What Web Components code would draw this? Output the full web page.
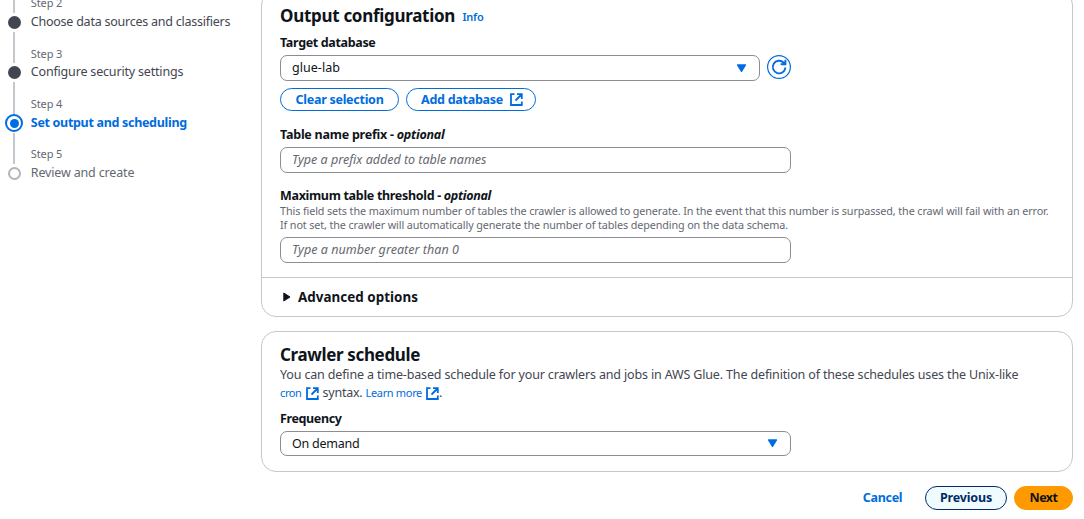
<!DOCTYPE html>
<html lang="en">
<head>
<meta charset="utf-8">
<title>Set output and scheduling</title>
<style>
html,body{margin:0;height:519px;overflow:hidden;background:#fff}
body{font-family:"Noto Sans","Open Sans",sans-serif;font-size:12.5px;color:#0f141a}
</style>
</head>
<body>
<crawler-wizard></crawler-wizard>
<script>
const define=(name,html,setup)=>customElements.define(name,class extends HTMLElement{
  connectedCallback(){
    if(this.shadowRoot)return;
    const root=this.attachShadow({mode:'open'});
    root.innerHTML=html;
    if(setup)setup(this,root);
  }
});

/* Text run tracked to a given advance width (attribute w). */
define('ui-text',`<style>:host{display:inline-block;white-space:nowrap;font-kerning:normal}span{display:inline-block}</style><span><slot></slot></span>`,(el,root)=>{
  const w=+el.getAttribute('w');
  const s=root.querySelector('span');
  const n=el.textContent.length;
  el.style.fontVariantLigatures='none';
  el.style.letterSpacing='0px';
  const nat=s.getBoundingClientRect().width;
  el.style.letterSpacing=((w-nat)/n).toFixed(4)+'px';
  el.style.width=w+'px';
});

define('external-icon',`<style>:host{display:inline-block;width:13px;height:13px}svg{display:block}</style>
<svg width="13" height="13" viewBox="0 0 13 13" fill="none" stroke="currentColor" stroke-width="1.8"><path d="M4.500 1.200H1v10.800h10.800V8.500M7 1.200h4.800V6M11.500 1.500L5.500 7.500"/></svg>`);

define('wizard-step',`<style>
:host{display:grid;grid-template-columns:28px 1fr;column-gap:2.500px;height:50.400px}
.rail{display:flex;flex-direction:column;align-items:center}
.line{width:2px;background:#c6c6cd;height:23.900px}
.after{height:auto;flex:1}
:host([state=todo]) .after{display:none}
.dot{box-sizing:border-box;width:13px;height:13px;border-radius:50%;background:#424650;margin:3px 0;flex:none}
:host([state=active]) .dot{width:18px;height:18px;border:2px solid #006ce0;background:#006ce0;background-clip:content-box;padding:2.500px;margin:.5px 0}
:host([state=todo]) .dot{background:#fff;border:2px solid #b4b4bb}
.text{padding-top:6.200px;color:#424650}
.n{font-size:11px;line-height:16px;height:16px;color:#656871;margin-bottom:1.600px}
.t{line-height:18px;height:18px}
:host([state=active]) .t{color:#006ce0;font-weight:700}
:host([state=todo]) .t{color:#656871}
</style><div class="rail"><div class="line"></div><div class="dot"></div><div class="line after"></div></div>
<div class="text"><div class="n"><slot name="n"></slot></div><div class="t"><slot></slot></div></div>`);

define('step-nav',`<style>:host{display:block;margin-top:-10.900px;padding-left:.3px}</style>
<wizard-step><ui-text slot="n" w="31.500">Step 2</ui-text><ui-text w="199.500">Choose data sources and classifiers</ui-text></wizard-step>
<wizard-step><ui-text slot="n" w="31.500">Step 3</ui-text><ui-text w="152.500">Configure security settings</ui-text></wizard-step>
<wizard-step state="active"><ui-text slot="n" w="31.500">Step 4</ui-text><ui-text w="156">Set output and scheduling</ui-text></wizard-step>
<wizard-step state="todo"><ui-text slot="n" w="31.500">Step 5</ui-text><ui-text w="103.500">Review and create</ui-text></wizard-step>`);

define('ui-card',`<style>:host{display:block;box-sizing:border-box;border:1px solid #c6c6cd;border-radius:15px;background:#fff}.b{padding:0 18px}</style><div class="b"><slot></slot></div><slot name="footer"></slot>`);

define('ui-heading',`<style>:host{display:flex;align-items:baseline;gap:7.500px;height:22px;line-height:22px;font-size:17px;font-weight:700}</style><slot></slot>`);

define('ui-link',`<style>:host{color:#006ce0;font-size:11px;font-weight:var(--w,400)}</style><slot></slot>`);

define('ui-label',`<style>:host{display:block;height:18px;line-height:18px;font-weight:700}</style><slot></slot>`);

define('ui-field',`<style>
:host{display:flex;align-items:center;justify-content:space-between;box-sizing:border-box;width:511px;height:26px;border:1px solid #8c8c94;border-radius:7px;padding:0 12.500px 0 11px;line-height:18px}
:host([placeholder]){color:#656871;font-style:italic}
svg{display:none}:host([select]) svg{display:block}
</style><slot></slot><svg width="11" height="9" viewBox="0 0 11 9"><path d="M1.500 1h8L5.500 7.500z" fill="#006ce0" stroke="#006ce0" stroke-width="1.300" stroke-linejoin="round"/></svg>`);

define('ui-button',`<style>
:host{display:inline-flex;align-items:center;justify-content:center;gap:7px;box-sizing:border-box;height:23px;border:1.500px solid #006ce0;border-radius:13px;color:#006ce0;font-weight:700;line-height:18px;background:#fff}
:host([kind=previous]){height:24px;border-color:#002b66;color:#002b66;background:#f0fbff}
:host([kind=next]){height:24px;border-color:#ff9900;background:#ff9900;color:#0f141a}
:host([kind=text]){height:24px;border-color:transparent}
</style><slot></slot>`);

define('refresh-button',`<style>:host{display:block;width:24px;height:24px}svg{display:block}</style>
<svg width="24" height="24" viewBox="0 0 24 24" fill="none" stroke="#006ce0"><circle cx="12" cy="12" r="11.400" stroke-width="1.200"/><path d="M18.400 12.500a6.300 6.300 0 1 1-1.900-5L18.300 9M18.400 4.700v4.500h-4.700" stroke-width="1.900"/></svg>`);

define('output-card',`<style>
:host{display:block}
ui-card{height:327px;padding-top:14px}
.row{display:flex;gap:7px;align-items:flex-start}
.hint{font-size:10.800px;line-height:14px;color:#656871;display:flex;flex-direction:column;margin-bottom:5px;height:28px}
.adv{display:flex;align-items:center;gap:7.500px;border-top:1px solid #c6c6cd;height:38px;margin-top:14px;padding-left:20.500px;font-size:13.400px;line-height:18px;font-weight:700}
.adv ui-text{margin-bottom:1px}
</style>
<ui-card>
<ui-heading><ui-text w="175">Output configuration</ui-text><ui-link style="--w:600;margin-bottom:1px;position:relative;top:-1px"><ui-text w="21">Info</ui-text></ui-link></ui-heading>
<ui-label style="margin:7px 0 3px"><ui-text w="95.500">Target database</ui-text></ui-label>
<div class="row"><ui-field select style="width:480px"><ui-text w="48">glue-lab</ui-text></ui-field><refresh-button></refresh-button></div>
<div class="row" style="margin:7px 0 15px"><ui-button style="width:119px"><ui-text w="88">Clear selection</ui-text></ui-button><ui-button style="width:130px;padding-left:2px"><ui-text w="82">Add database</ui-text><external-icon></external-icon></ui-button></div>
<ui-label style="margin-bottom:3px"><ui-text w="164.500">Table name prefix - <i>optional</i></ui-text></ui-label>
<ui-field placeholder><ui-text w="194.500">Type a prefix added to table names</ui-text></ui-field>
<ui-label style="margin-top:14px;height:17px"><ui-text w="211">Maximum table threshold - <i>optional</i></ui-text></ui-label>
<div class="hint"><ui-text w="768.500">This field sets the maximum number of tables the crawler is allowed to generate. In the event that this number is surpassed, the crawl will fail with an error.</ui-text><ui-text w="508">If not set, the crawler will automatically generate the number of tables depending on the data schema.</ui-text></div>
<ui-field placeholder><ui-text w="167">Type a number greater than 0</ui-text></ui-field>
<div class="adv" slot="footer"><svg width="8" height="10" viewBox="0 0 8 10"><path d="M.8 1L7 5 .8 9z" fill="#0f141a" stroke="#0f141a" stroke-linejoin="round"/></svg><ui-text w="120">Advanced options</ui-text></div>
</ui-card>`);

define('schedule-card',`<style>
:host{display:block;margin-top:14px}
ui-card{height:141px;padding-top:12px}
.d{color:#424650;line-height:18px;height:18px;display:flex;align-items:center}
external-icon{color:#006ce0;margin:1px 4px 0}
</style>
<ui-card>
<ui-heading><ui-text w="140">Crawler schedule</ui-text></ui-heading>
<div class="d"><ui-text w="738.500">You can define a time-based schedule for your crawlers and jobs in AWS Glue. The definition of these schedules uses the Unix-like</ui-text></div>
<div class="d"><ui-link><ui-text w="21.500">cron</ui-text></ui-link><external-icon></external-icon><ui-text w="40">syntax.</ui-text><ui-link style="margin-left:3px"><ui-text w="56.500">Learn more</ui-text></ui-link><external-icon style="margin-right:0"></external-icon><ui-text w="3">.</ui-text></div>
<ui-label style="margin:8px 0 3px"><ui-text w="61.500">Frequency</ui-text></ui-label>
<ui-field select style="height:25px"><ui-text w="67.500">On demand</ui-text></ui-field>
</ui-card>`);

define('wizard-actions',`<style>:host{display:flex;justify-content:flex-end;gap:7px;margin-top:14px}</style>
<ui-button kind="text" style="width:71px"><ui-text w="39.500">Cancel</ui-text></ui-button>
<ui-button kind="previous" style="width:82px"><ui-text w="52">Previous</ui-text></ui-button>
<ui-button kind="next" style="width:59px"><ui-text w="28">Next</ui-text></ui-button>`);

define('crawler-wizard',`<style>:host{display:grid;grid-template-columns:261px 812px;height:519px;overflow:hidden}main{margin-top:-10px}</style>
<step-nav></step-nav><main><output-card></output-card><schedule-card></schedule-card><wizard-actions></wizard-actions></main>`);
</script>
</body>
</html>
